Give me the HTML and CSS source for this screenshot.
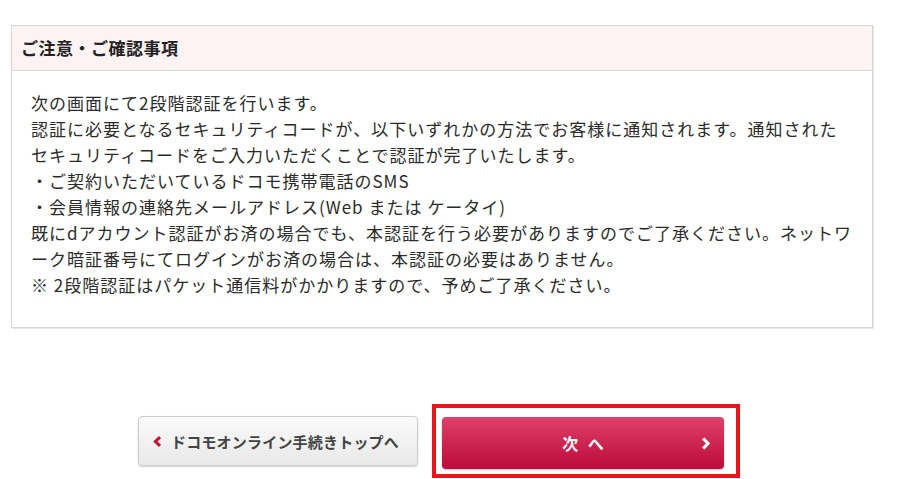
FILE: index.html
```html
<!DOCTYPE html>
<html lang="ja">
<head>
<meta charset="utf-8">
<title>ご注意・ご確認事項</title>
<link rel="stylesheet" href="styles.css">
</head>
<body>
<div class="page">
  <section class="notice">
    <h2 class="notice-head">ご注意・ご確認事項</h2>
    <div class="notice-body">
      <p>次の画面にて2段階認証を行います。</p>
      <p>認証に必要となるセキュリティコードが、以下いずれかの方法でお客様に通知されます。通知されたセキュリティコードをご入力いただくことで認証が完了いたします。</p>
      <p>・ご契約いただいているドコモ携帯電話のSMS</p>
      <p>・会員情報の連絡先メールアドレス(Web または ケータイ)</p>
      <p>既にdアカウント認証がお済の場合でも、本認証を行う必要がありますのでご了承ください。ネットワーク暗証番号にてログインがお済の場合は、本認証の必要はありません。</p>
      <p>※ 2段階認証はパケット通信料がかかりますので、予めご了承ください。</p>
    </div>
  </section>
  <div class="actions">
    <a class="btn btn-back" href="#">
      <svg class="chev" width="9" height="11" viewBox="0 0 9 11"><path d="M7 1.2 L2.4 5.5 L7 9.8" fill="none" stroke="#c8102e" stroke-width="3"/></svg>
      <span>ドコモオンライン手続きトップへ</span>
    </a>
    <div class="highlight">
      <a class="btn btn-next" href="#">
        <span class="next-label">次 へ</span>
        <svg class="chev-next" width="10" height="13" viewBox="0 0 10 13"><path d="M2.2 1.5 L7 6.5 L2.2 11.5" fill="none" stroke="#ffffff" stroke-width="3.2"/></svg>
      </a>
    </div>
  </div>
</div>
</body>
</html>
```
FILE: styles.css
```css
* { box-sizing: border-box; }
html, body { margin: 0; padding: 0; background: #ffffff; }
body {
  font-family: "Noto Sans CJK JP", "Noto Sans", sans-serif;
  color: #2b2b2b;
}
.page {
  padding: 25px 0 0 11px;
}
.notice {
  width: 862px;
  border: 1px solid #d6d6d6;
  box-shadow: 1px 1px 0 #e6e6e6;
  background: #ffffff;
}
.notice-head {
  margin: 0;
  height: 45px;
  line-height: 44px;
  padding-left: 9px;
  background: #fdf3f2;
  border-bottom: 1px solid #d6d6d6;
  font-size: 17px;
  letter-spacing: 0.5px;
  font-weight: bold;
  color: #222222;
}
.notice-body {
  padding: 19px 19px 29px;
  font-size: 17px;
  letter-spacing: 1px;
  line-height: 26px;
  line-break: loose;
}
.notice-body p { margin: 0; }
.actions {
  display: flex;
  align-items: center;
  gap: 14px;
  margin-top: 76px;
  padding-left: 127px;
}
.btn {
  display: flex;
  align-items: center;
  text-decoration: none;
  border-radius: 4px;
}
.btn-back {
  width: 280px;
  height: 50px;
  justify-content: center;
  gap: 9px;
  border: 1px solid #cccccc;
  background: linear-gradient(#fbfbfb, #e8e8e8);
  box-shadow: 0 1px 2px rgba(0, 0, 0, 0.18);
  color: #444444;
  font-size: 15px;
  font-weight: bold;
  letter-spacing: 0.2px;
  padding-right: 4px;
}
.highlight {
  border: 4px solid #e8151d;
  padding: 9px 12px 5px 6px;
}
.btn-next {
  position: relative;
  width: 282px;
  height: 52px;
  justify-content: center;
  background: linear-gradient(#de4169, #bc0a3b);
  box-shadow: 0 1px 2px rgba(0, 0, 0, 0.25);
  color: #ffffff;
  font-size: 16px;
  font-weight: bold;
}
.next-label {
  word-spacing: 6px;
}
.chev-next {
  position: absolute;
  right: 13px;
  top: 20px;
}
```
